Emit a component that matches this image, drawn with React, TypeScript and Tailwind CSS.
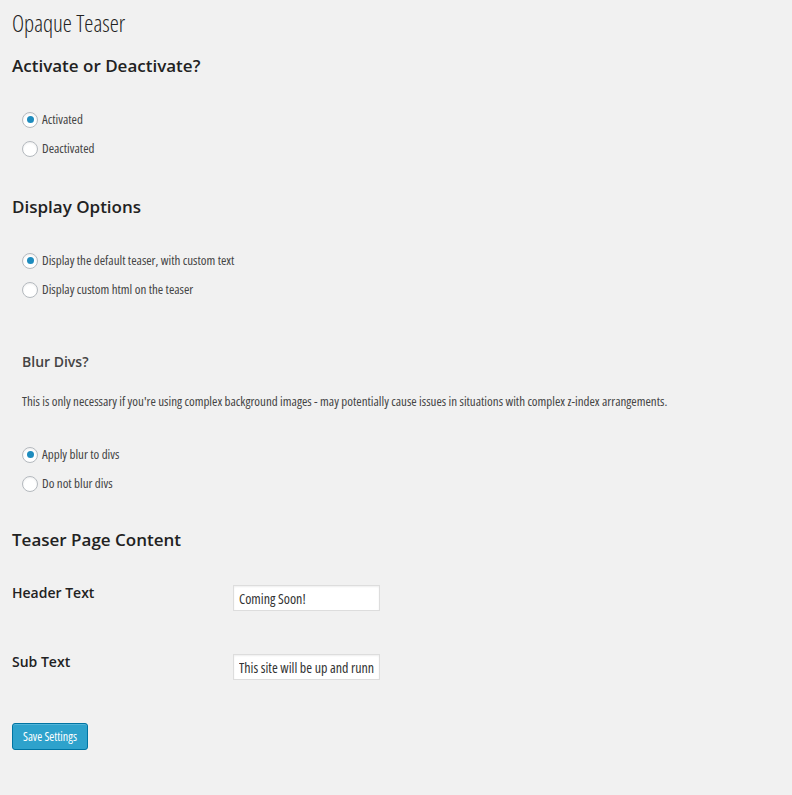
import React from 'react';

const condensed = "font-['Open_Sans','Liberation_Sans_Narrow',sans-serif] font-stretch-[75%]";

interface RadioProps {
  label: string;
  checked?: boolean;
}

const Radio: React.FC<RadioProps> = ({ label, checked = false }) => (
  <label className="flex h-[29px] items-center">
    <span className="flex h-4 w-4 flex-none items-center justify-center rounded-full border border-[#b4b9be] bg-white shadow-[inset_0_1px_2px_rgba(0,0,0,0.07)]">
      {checked && <span className="h-[7px] w-[7px] rounded-full bg-[#1e8cbe]" />}
    </span>
    <span className={`ml-1 text-[13px] text-[#444] ${condensed}`}>{label}</span>
  </label>
);

const SectionHeading: React.FC<{ children: React.ReactNode }> = ({ children }) => (
  <h3 className="text-[17px] font-semibold leading-none text-[#222] font-['Open_Sans',sans-serif]">
    {children}
  </h3>
);

const inputClass = `h-[26px] w-[147px] border border-[#ddd] bg-white px-[5px] text-[14px] text-[#333] outline-none shadow-[inset_0_1px_2px_rgba(0,0,0,0.07)] ${condensed}`;

export default function App() {
  return (
    <div className="min-h-[795px] w-full bg-[#f1f1f1] pl-3 pt-[9px] font-['Open_Sans',sans-serif]">
      <h2 className={`text-[23px] font-light leading-[29px] text-[#222] ${condensed}`}>Opaque Teaser</h2>

      <div className="mt-[19px]">
        <SectionHeading>Activate or Deactivate?</SectionHeading>
      </div>
      <div className="ml-[10px] mt-[31px]">
        <Radio label="Activated" checked />
        <Radio label="Deactivated" />
      </div>

      <div className="mt-[35px]">
        <SectionHeading>Display Options</SectionHeading>
      </div>
      <div className="ml-[10px] mt-[31px]">
        <Radio label="Display the default teaser, with custom text" checked />
        <Radio label="Display custom html on the teaser" />
      </div>

      <div className="ml-[10px]">
        <h4 className="mt-[51px] text-[14px] font-semibold leading-none text-[#444]">Blur Divs?</h4>
        <p className={`mt-[26px] text-[13px] leading-none text-[#444] ${condensed}`}>
          This is only necessary if you're using complex background images - may potentially cause issues in situations with complex z-index arrangements.
        </p>
        <div className="mt-[32px]">
          <Radio label="Apply blur to divs" checked />
          <Radio label="Do not blur divs" />
        </div>
      </div>

      <div className="mt-[33px]">
        <SectionHeading>Teaser Page Content</SectionHeading>
      </div>

      <div className="mt-[37px] flex items-start">
        <div className="w-[221px] text-[14px] font-semibold leading-[16px] text-[#222]">Header Text</div>
        <input readOnly value="Coming Soon!" className={inputClass} />
      </div>

      <div className="mt-[43px] flex items-start">
        <div className="w-[221px] text-[14px] font-semibold leading-[16px] text-[#222]">Sub Text</div>
        <input readOnly value="This site will be up and running soon" className={inputClass} />
      </div>

      <button
        className={`mt-[43px] h-[27px] rounded-[3px] border border-[#0074a2] bg-[#2ea2cc] px-[10px] text-[12px] text-white shadow-[inset_0_1px_0_rgba(120,200,230,0.5)] ${condensed}`}
      >
        Save Settings
      </button>
    </div>
  );
}
